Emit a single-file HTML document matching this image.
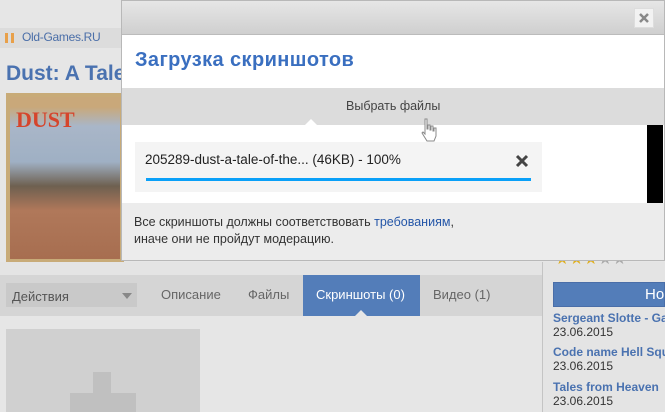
<!DOCTYPE html>
<html><head><meta charset="utf-8"><style>
*{margin:0;padding:0;box-sizing:border-box}
body{width:665px;height:412px;overflow:hidden;background:#e6e6e6;font-family:"Liberation Sans","DejaVu Sans",sans-serif;position:relative}
.a{position:absolute;white-space:nowrap}
</style></head><body>
<div class="a" style="left:0;top:28px;width:122px;height:20px;background:#dcdcdc"></div>
<div class="a" style="left:5px;top:33px;width:3px;height:10px;background:#e8a04a"></div>
<div class="a" style="left:11px;top:33px;width:3px;height:10px;background:#e8a04a"></div>
<div class="a" style="left:22px;top:30px;font-size:12px;color:#4a6ea8;letter-spacing:-0.3px">Old-Games.RU</div>
<div class="a" style="left:6px;top:62px;font-size:21px;font-weight:bold;color:#4a72b0">Dust: A Tale</div>
<div class="a" style="left:6px;top:93px;width:118px;height:170px;background:linear-gradient(#c9a87a 0,#c9a87a 10px,#a9b6c8 18%,#9fb0c4 40%,#6e6050 55%,#b0785a 70%,#a76e50 100%);border:4px solid #c8ab78"></div>
<div class="a" style="left:16px;top:107px;font-size:22px;font-weight:bold;color:#d5452c;font-family:'Liberation Serif',serif">DUST</div>
<div class="a" style="left:0;top:262px;width:542px;height:13px;background:#e4e4e4"></div>
<div class="a" style="left:0;top:275px;width:542px;height:41px;background:#d5d5d5"></div>
<div class="a" style="left:6px;top:283px;width:131px;height:24px;background:#c9c9c9"></div>
<div class="a" style="left:12px;top:289px;font-size:13px;color:#555">Действия</div>
<div class="a" style="left:122px;top:293px;width:0;height:0;border-left:5px solid transparent;border-right:5px solid transparent;border-top:6px solid #888"></div>
<div class="a" style="left:161px;top:287px;font-size:13px;color:#666">Описание</div>
<div class="a" style="left:248px;top:287px;font-size:13px;color:#666">Файлы</div>
<div class="a" style="left:303px;top:275px;width:117px;height:41px;background:#537db9"></div>
<div class="a" style="left:316px;top:287px;font-size:13px;color:#fff">Скриншоты (0)</div>
<div class="a" style="left:355px;top:310px;width:0;height:0;border-left:6px solid transparent;border-right:6px solid transparent;border-bottom:6px solid #e6e6e6"></div>
<div class="a" style="left:433px;top:287px;font-size:13px;color:#666">Видео (1)</div>
<div class="a" style="left:6px;top:329px;width:194px;height:83px;background:#d0d0d0"></div>
<div class="a" style="left:93px;top:372px;width:18px;height:40px;background:#c0c0c0"></div>
<div class="a" style="left:70px;top:393px;width:66px;height:19px;background:#c0c0c0"></div>
<div class="a" style="left:542px;top:262px;width:1px;height:150px;background:#c4c4c4"></div>
<div class="a" style="left:543px;top:262px;width:122px;height:150px;background:#e4e4e4"></div>
<div class="a" style="left:555px;top:249px;font-size:16px;color:#e0b020">★★★<span style="color:#aaa">★★</span></div>
<div class="a" style="left:553px;top:282px;width:112px;height:25px;background:#537db9;border:1px solid #4a6ea8"></div>
<div class="a" style="left:645px;top:286px;font-size:15px;color:#fff">Но</div>
<div class="a" style="left:553px;top:311px;font-size:12px;font-weight:bold;color:#4a72b0">Sergeant Slotte - Ga</div>
<div class="a" style="left:553px;top:325px;font-size:12px;color:#333">23.06.2015</div>
<div class="a" style="left:553px;top:345px;font-size:12px;font-weight:bold;color:#4a72b0">Code name Hell Squ</div>
<div class="a" style="left:553px;top:359px;font-size:12px;color:#333">23.06.2015</div>
<div class="a" style="left:553px;top:380px;font-size:12px;font-weight:bold;color:#4a72b0">Tales from Heaven</div>
<div class="a" style="left:553px;top:394px;font-size:12px;color:#333">23.06.2015</div>
<div class="a" style="left:121px;top:0;width:544px;height:261px;background:#fff;border:1px solid #b8b8b8"></div>
<div class="a" style="left:122px;top:1px;width:542px;height:34px;background:linear-gradient(#e6e6e6,#cfcfcf);border-bottom:1px solid #bbb"></div>
<div class="a" style="left:634px;top:8px;width:20px;height:20px;background:#f2f2f2;border:1px solid #ddd"><svg width="18" height="18" viewBox="0 0 18 18"><path d="M5 5L13 13M13 5L5 13" stroke="#888" stroke-width="2.5"/></svg></div>
<div class="a" style="left:135px;top:49px;font-size:20px;font-weight:bold;color:#3a6fc0;letter-spacing:0.4px">Загрузка скриншотов</div>
<div class="a" style="left:122px;top:88px;width:542px;height:37px;background:#dcdcdc"></div>
<div class="a" style="left:346px;top:99px;font-size:12.5px;color:#444">Выбрать файлы</div>
<div class="a" style="left:305px;top:119px;width:0;height:0;border-left:6px solid transparent;border-right:6px solid transparent;border-bottom:6px solid #fff"></div>
<svg class="a" style="left:419px;top:117px" width="20" height="26" viewBox="0 0 20 26"><path d="M6 2h2v10h1V8h2v5h1V9h2v5h1v-3h2v8l-2 5H8L3 16l1-1 2 2z" fill="#fff" stroke="#888" stroke-width="1"/></svg>
<div class="a" style="left:647px;top:125px;width:16px;height:78px;background:#000"></div>
<div class="a" style="left:135px;top:142px;width:407px;height:50px;background:#f4f4f4"></div>
<div class="a" style="left:145px;top:152px;font-size:13.5px;color:#222">205289-dust-a-tale-of-the... (46KB) - 100%</div>
<svg class="a" style="left:515px;top:154px" width="14" height="14" viewBox="0 0 14 14"><path d="M2 2L12 12M12 2L2 12" stroke="#444" stroke-width="3"/></svg>
<div class="a" style="left:146px;top:178px;width:385px;height:3px;background:#0aa0f8"></div>
<div class="a" style="left:122px;top:203px;width:542px;height:57px;background:#ececec"></div>
<div class="a" style="left:134px;top:214px;font-size:12.5px;color:#333;line-height:17px">Все скриншоты должны соответствовать <span style="color:#2456a8">требованиям</span>,<br>иначе они не пройдут модерацию.</div>
</body></html>
